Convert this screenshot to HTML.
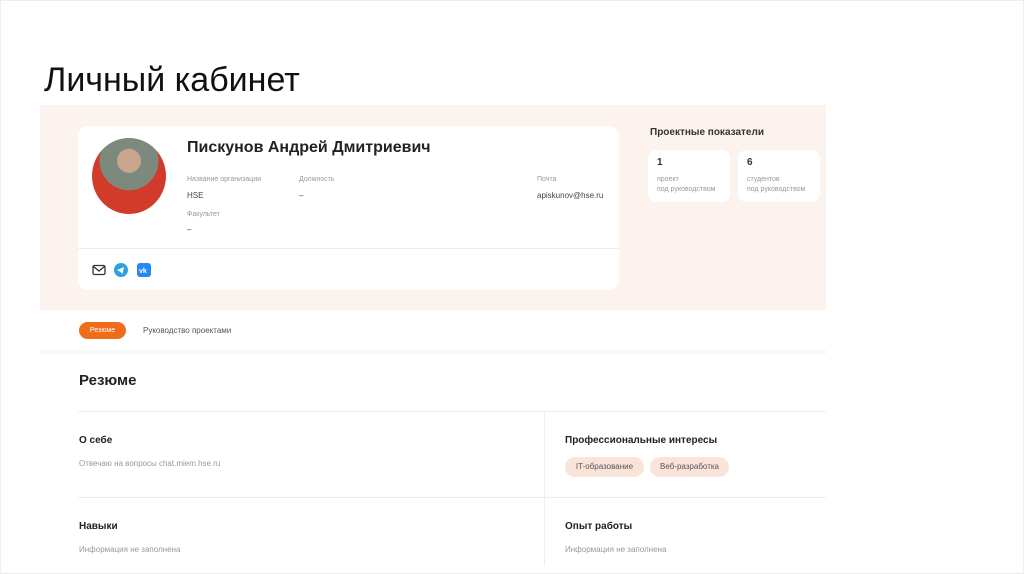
<!DOCTYPE html>
<html><head><meta charset="utf-8"><style>
*{margin:0;padding:0;box-sizing:border-box}
body{width:1024px;height:574px;background:#fff;font-family:"Liberation Sans",sans-serif;position:relative;overflow:hidden;color:#333}
.a{position:absolute}
.s{font-size:7px;color:#999}
.v{font-size:8px;color:#444}
.b{font-weight:bold}
</style></head><body>
<div class="a" style="left:0;top:0;width:1024px;height:574px;border:1px solid #eee"></div>
<div class="a" style="left:44px;top:61px;font-size:34px;color:#111">Личный кабинет</div>
<div class="a" style="left:40px;top:105px;width:786px;height:205px;background:#fcf2ee"></div>
<div class="a" style="left:40px;top:310px;width:786px;height:256px;background:#fff"></div>
<div class="a" style="left:78px;top:126px;width:541px;height:164px;background:#fff;border-radius:10px"></div>
<div class="a" style="left:92px;top:138px;width:74px;height:76px;border-radius:50%;background:radial-gradient(circle at 50% 30%,#c9a58e 0 18%,#7c8a7e 19% 45%,#d23a2a 46%)"></div>
<div class="a b" style="left:187px;top:139px;font-size:16px;color:#222">Пискунов Андрей Дмитриевич</div>
<div class="a s" style="left:187px;top:176px">Название организации</div>
<div class="a v" style="left:187px;top:191px">HSE</div>
<div class="a s" style="left:299px;top:176px">Должность</div>
<div class="a v" style="left:299px;top:191px">–</div>
<div class="a s" style="left:537px;top:176px">Почта</div>
<div class="a v" style="left:537px;top:191px">apiskunov@hse.ru</div>
<div class="a s" style="left:187px;top:211px">Факультет</div>
<div class="a v" style="left:187px;top:225px">–</div>
<div class="a" style="left:78px;top:248px;width:541px;height:1px;background:#eee"></div>
<svg class="a" style="left:92px;top:263px" width="62" height="14"><rect x="1" y="2.5" width="12" height="9" rx="1.5" fill="none" stroke="#333" stroke-width="1.3"/><path d="M1.5 3.5L7 8l5.5-4.5" fill="none" stroke="#333" stroke-width="1.3"/><circle cx="29" cy="7" r="7" fill="#2aa1e0"/><path d="M25 7l7-3-1.5 7-2-2z" fill="#fff"/><rect x="45" y="0" width="14" height="14" rx="3" fill="#2787f5"/><text x="47" y="10" font-size="7" fill="#fff" font-weight="bold">vk</text></svg>
<div class="a b" style="left:650px;top:127px;font-size:10px;color:#333">Проектные показатели</div>
<div class="a" style="left:648px;top:150px;width:82px;height:52px;background:#fff;border-radius:8px"></div>
<div class="a" style="left:738px;top:150px;width:82px;height:52px;background:#fff;border-radius:8px"></div>
<div class="a b" style="left:657px;top:157px;font-size:10px;color:#333">1</div>
<div class="a s" style="left:657px;top:175px;line-height:10px">проект<br>под руководством</div>
<div class="a b" style="left:747px;top:157px;font-size:10px;color:#333">6</div>
<div class="a s" style="left:747px;top:175px;line-height:10px">студентов<br>под руководством</div>
<div class="a" style="left:79px;top:322px;width:47px;height:17px;background:#ef6c1a;border-radius:9px;color:#fff;font-size:7px;text-align:center;line-height:17px">Резюме</div>
<div class="a" style="left:143px;top:326px;font-size:8px;color:#555">Руководство проектами</div>
<div class="a" style="left:40px;top:350px;width:786px;height:4px;background:#f8f8f8"></div>
<div class="a b" style="left:79px;top:372px;font-size:15px;color:#222">Резюме</div>
<div class="a" style="left:78px;top:411px;width:748px;height:1px;background:#eee"></div>
<div class="a" style="left:78px;top:497px;width:748px;height:1px;background:#eee"></div>
<div class="a" style="left:544px;top:412px;width:1px;height:154px;background:#eee"></div>
<div class="a b" style="left:79px;top:435px;font-size:10px;color:#222">О себе</div>
<div class="a s" style="left:79px;top:459px;font-size:8px">Отвечаю на вопросы chat.miem.hse.ru</div>
<div class="a b" style="left:565px;top:435px;font-size:10px;color:#222">Профессиональные интересы</div>
<div class="a" style="left:565px;top:457px;width:79px;height:20px;background:#fae4da;border-radius:10px;font-size:8px;color:#555;text-align:center;line-height:20px">IT-образование</div>
<div class="a" style="left:650px;top:457px;width:79px;height:20px;background:#fae4da;border-radius:10px;font-size:8px;color:#555;text-align:center;line-height:20px">Веб-разработка</div>
<div class="a b" style="left:79px;top:521px;font-size:10px;color:#222">Навыки</div>
<div class="a s" style="left:79px;top:545px;font-size:8px">Информация не заполнена</div>
<div class="a b" style="left:565px;top:521px;font-size:10px;color:#222">Опыт работы</div>
<div class="a s" style="left:565px;top:545px;font-size:8px">Информация не заполнена</div>
</body></html>
